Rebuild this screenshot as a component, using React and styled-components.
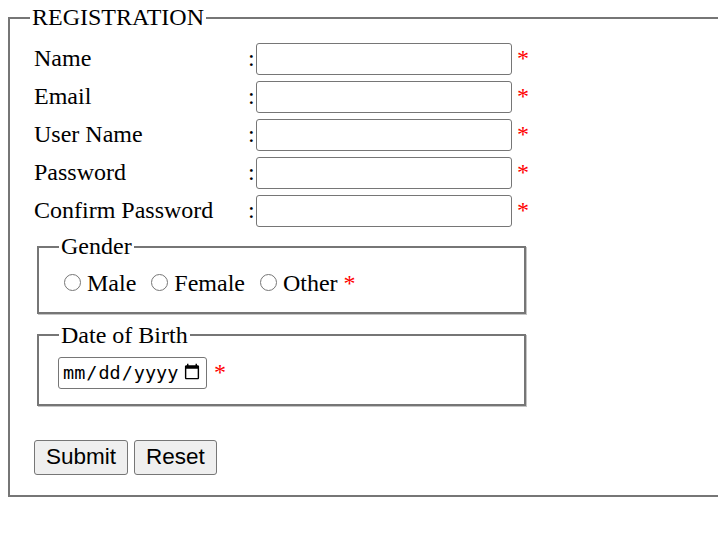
import styled, { createGlobalStyle } from "styled-components";

const GlobalStyle = createGlobalStyle`
  html, body {
    overflow: hidden;
  }
  body {
    margin: 0;
    padding: 4px 0 0 8px;
    background: #ffffff;
    color: #000000;
    font-family: "Liberation Serif", "Times New Roman", serif;
    font-size: 24px;
  }
`;

const fields = [
  { id: "name", label: "Name", type: "text" },
  { id: "email", label: "Email", type: "email" },
  { id: "username", label: "User Name", type: "text" },
  { id: "password", label: "Password", type: "password" },
  { id: "confirm", label: "Confirm Password", type: "password" },
];

export default function App() {
  function handleSubmit(event) {
    event.preventDefault();
  }

  return (
    <>
      <GlobalStyle />
      <form onSubmit={handleSubmit}>
        <OuterSet>
          <Legend>REGISTRATION</Legend>

          <FieldGrid>
            {fields.map((field) => (
              <Row key={field.id}>
                <Label htmlFor={field.id}>{field.label}</Label>
                <Colon>:</Colon>
                <TextInput type={field.type} id={field.id} name={field.id} />
                <Star $gap={5}>*</Star>
              </Row>
            ))}
          </FieldGrid>

          <InnerSet $top={3} $bottom={14}>
            <Legend>Gender</Legend>
            <RadioRow>
              <RadioLabel>
                <Radio type="radio" name="gender" value="male" />
                Male
              </RadioLabel>
              <RadioLabel>
                <Radio type="radio" name="gender" value="female" />
                Female
              </RadioLabel>
              <RadioLabel>
                <Radio type="radio" name="gender" value="other" />
                Other
              </RadioLabel>
              <Star $gap={6}>*</Star>
            </RadioRow>
          </InnerSet>

          <InnerSet $top={8} $bottom={15}>
            <Legend>Date of Birth</Legend>
            <DateRow>
              <DateInput type="date" name="dob" />
              <Star $gap={7}>*</Star>
            </DateRow>
          </InnerSet>

          <Buttons>
            <Button type="submit">Submit</Button>
            <Button type="reset">Reset</Button>
          </Buttons>
        </OuterSet>
      </form>
    </>
  );
}

const OuterSet = styled.fieldset`
  margin: 0;
  width: 800px;
  padding: 0 20px 20px 20px;
  border: 2px solid #767676;
  box-shadow: 1px 1px 0 #c4c4c4;
`;

const Legend = styled.legend`
  padding: 0 2px;
  font-size: 24px;
`;

const FieldGrid = styled.div`
  display: grid;
  grid-auto-rows: 38px;
  margin: 9px 0 0 4px;
`;

const Row = styled.div`
  display: grid;
  grid-template-columns: 214px 8px 256px auto;
  align-items: center;
`;

const Label = styled.label`
  line-height: 1.15;
`;

const Colon = styled.span`
  line-height: 1.15;
`;

const TextInput = styled.input`
  box-sizing: border-box;
  width: 256px;
  height: 32px;
  margin: 0;
  padding: 1px 4px;
  border: 1px solid #767676;
  border-radius: 3px;
  font-size: 16px;
`;

const Star = styled.span`
  margin-left: ${(p) => p.$gap}px;
  color: #ff0000;
  line-height: 1.15;
`;

const InnerSet = styled.fieldset`
  box-sizing: border-box;
  width: 489px;
  margin: ${(p) => p.$top}px 0 0 7px;
  padding: 0 20px ${(p) => p.$bottom}px 20px;
  border: 2px solid #767676;
  box-shadow: 1px 1px 0 #c4c4c4;
`;

const RadioRow = styled.div`
  display: flex;
  align-items: center;
  margin-top: 10px;
  line-height: 1.15;
`;

const RadioLabel = styled.label`
  display: flex;
  align-items: center;
  & + & {
    margin-left: 10px;
  }
`;

const Radio = styled.input`
  width: 17px;
  height: 17px;
  margin: 0 6px 3px 5px;
`;

const DateRow = styled.div`
  display: flex;
  align-items: center;
  margin-top: 8px;
`;

const DateInput = styled.input`
  box-sizing: border-box;
  width: 149px;
  height: 32px;
  margin: 0 0 0 -1px;
  padding: 1px 3px;
  border: 1px solid #767676;
  border-radius: 3px;
  font-family: "DejaVu Sans Mono", monospace;
  font-size: 18.5px;
`;

const Buttons = styled.div`
  display: flex;
  gap: 6px;
  margin: 34px 0 0 4px;
`;

const Button = styled.button`
  box-sizing: border-box;
  height: 35px;
  padding: 0 11px;
  border: 1px solid #767676;
  border-radius: 3px;
  background: #efefef;
  color: #000000;
  font-family: "Liberation Sans", Arial, sans-serif;
  font-size: 22.5px;
`;
